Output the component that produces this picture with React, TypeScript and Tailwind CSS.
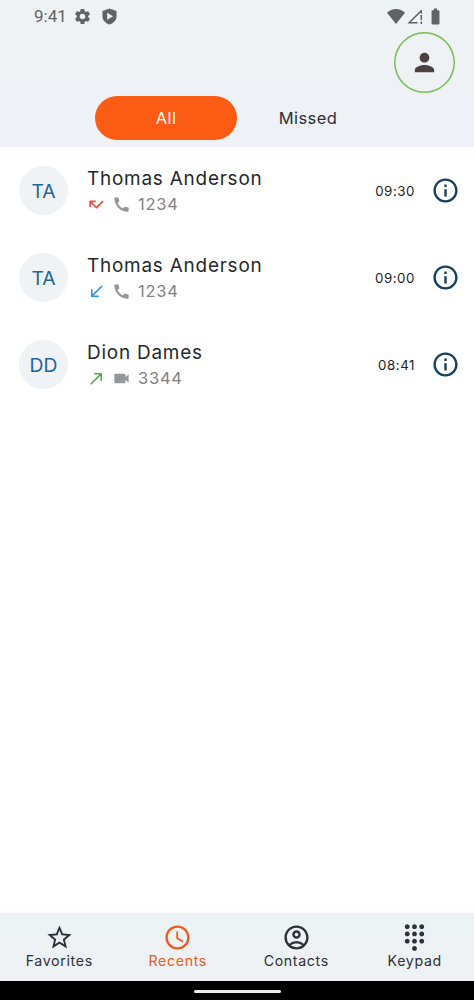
import { useState } from 'react';
import type { IconType } from 'react-icons';
import {
  MdAccessTime,
  MdBatteryFull,
  MdCall,
  MdCallMade,
  MdCallMissed,
  MdCallReceived,
  MdDialpad,
  MdInfoOutline,
  MdOutlineAccountCircle,
  MdPerson,
  MdSettings,
  MdStarBorder,
  MdVideocam,
} from 'react-icons/md';

type Direction = 'missed' | 'incoming' | 'outgoing';
type Filter = 'all' | 'missed';

interface Call {
  id: number;
  name: string;
  initials: string;
  number: string;
  time: string;
  direction: Direction;
  video?: boolean;
}

const CALLS: Call[] = [
  { id: 1, name: 'Thomas Anderson', initials: 'TA', number: '1234', time: '09:30', direction: 'missed' },
  { id: 2, name: 'Thomas Anderson', initials: 'TA', number: '1234', time: '09:00', direction: 'incoming' },
  { id: 3, name: 'Dion Dames', initials: 'DD', number: '3344', time: '08:41', direction: 'outgoing', video: true },
];

const DIRECTIONS: Record<Direction, { icon: IconType; color: string }> = {
  missed: { icon: MdCallMissed, color: 'text-[#e9483f]' },
  incoming: { icon: MdCallReceived, color: 'text-[#2e95e8]' },
  outgoing: { icon: MdCallMade, color: 'text-[#4caf50]' },
};

const FILTERS: { value: Filter; label: string }[] = [
  { value: 'all', label: 'All' },
  { value: 'missed', label: 'Missed' },
];

const NAV_ITEMS: { label: string; icon: IconType }[] = [
  { label: 'Favorites', icon: MdStarBorder },
  { label: 'Recents', icon: MdAccessTime },
  { label: 'Contacts', icon: MdOutlineAccountCircle },
  { label: 'Keypad', icon: MdDialpad },
];

function StatusBar() {
  return (
    <div className="flex h-8 items-center pl-[34px] pr-[29px] text-[#5f6364]">
      <span className="font-['Roboto',sans-serif] text-[17px] leading-none">9:41</span>
      <MdSettings className="ml-[6px] size-[19px]" />
      <svg viewBox="0 0 16 18" className="ml-[10px] h-[17px] w-[15px]" fill="currentColor">
        <path
          fillRule="evenodd"
          d="M8 0.5 15.5 3v6c0 4-3 7-7.500 8.500C3.500 16 0.500 13 0.500 9V3L8 0.500zM5.500 5v7.500L11.800 8.700 5.500 5z"
        />
      </svg>
      <svg viewBox="0 0 18 15" className="ml-auto h-[15px] w-[18px]" fill="currentColor">
        <path d="M9 15 0 3.800C2.500 1.400 5.500 0 9 0s6.500 1.400 9 3.800L9 15z" />
      </svg>
      <svg viewBox="0 0 16 15" className="ml-[2px] h-[15px] w-4" fill="none" stroke="currentColor">
        <path d="M10.500 13.700H2.200L14 2" strokeWidth="1.500" />
        <path d="M14.300 1v3.500M14.300 6v5M14.300 12.600V15" strokeWidth="1.500" />
      </svg>
      <MdBatteryFull className="ml-[3px] size-[19px]" />
    </div>
  );
}

function CallRow({ call }: { call: Call }) {
  const { icon: DirectionIcon, color } = DIRECTIONS[call.direction];
  const TypeIcon = call.video ? MdVideocam : MdCall;

  return (
    <li className="flex h-[87px] items-center pl-[19px] pr-[14px]">
      <div className="flex size-[49px] items-center justify-center rounded-full bg-[#eff3f5] pt-[2px] text-[19.3px] text-[#22659b]">
        {call.initials}
      </div>
      <div className="ml-[19px] flex-1 pt-[2px]">
        <p className="text-[18.900px] leading-[25px] tracking-[0.8px] text-[#25282a]">{call.name}</p>
        <div className="flex h-[27px] items-center">
          <DirectionIcon className={`size-[19px] ${color}`} />
          <TypeIcon className="ml-[6px] size-[19px] text-[#949698]" />
          <span className="ml-[7px] pt-px text-[16.500px] tracking-[0.75px] text-[#808284]">{call.number}</span>
        </div>
      </div>
      <span className="pt-[2px] text-[13.300px] tracking-[0.55px] text-[#1e1e1e]">{call.time}</span>
      <button className="ml-4 cursor-pointer">
        <MdInfoOutline className="size-[29px] text-[#15405f]" />
      </button>
    </li>
  );
}

export default function App() {
  const [filter, setFilter] = useState<Filter>('all');
  const [active, setActive] = useState('Recents');

  const calls = filter === 'all' ? CALLS : CALLS.filter((c) => c.direction === 'missed');

  return (
    <div className="flex h-[1000px] w-[474px] flex-col overflow-hidden bg-white font-['Inter',sans-serif]">
      {/* Header */}
      <header className="h-[147px] bg-linear-to-b from-[#edf2f3] to-[#eff1f6]">
        <StatusBar />
        <div className="flex justify-end pr-[19px]">
          <button className="flex size-[61px] cursor-pointer items-center justify-center rounded-full shadow-[inset_0_0_0_1.500px_#79bd55]">
            <MdPerson className="size-[29px] text-[#4e3f43]" />
          </button>
        </div>
        <div className="mt-[3px] flex justify-center">
          {FILTERS.map((f) => (
            <button
              key={f.value}
              onClick={() => setFilter(f.value)}
              className={`h-[44px] w-[142px] cursor-pointer rounded-full pt-px text-[16.500px] tracking-[0.4px] ${
                filter === f.value ? 'bg-[#fc5b14] text-white' : 'text-[#2d3036]'
              }`}
            >
              {f.label}
            </button>
          ))}
        </div>
      </header>

      <ul className="flex-1">
        {calls.map((call) => (
          <CallRow key={call.id} call={call} />
        ))}
      </ul>

      {/* Bottom navigation */}
      <nav className="grid h-[68px] grid-cols-4 bg-linear-to-b from-[#ecf2f3] to-[#eff1f5] shadow-[0_-1px_3px_rgba(0,0,0,0.04)]">
        {NAV_ITEMS.map(({ label, icon: Icon }) => (
          <button
            key={label}
            onClick={() => setActive(label)}
            className={`flex cursor-pointer flex-col items-center pt-[10px] ${
              active === label ? 'text-[#ec5c20]' : 'text-[#2d3236]'
            }`}
          >
            <Icon className="size-[29px]" />
            <span className="text-[14.200px] leading-[18px] tracking-[0.65px]">{label}</span>
          </button>
        ))}
      </nav>

      <div className="flex h-[19px] items-center justify-center bg-black pt-[2px]">
        <div className="h-[3px] w-[87px] rounded-full bg-[#ececec]" />
      </div>
    </div>
  );
}
